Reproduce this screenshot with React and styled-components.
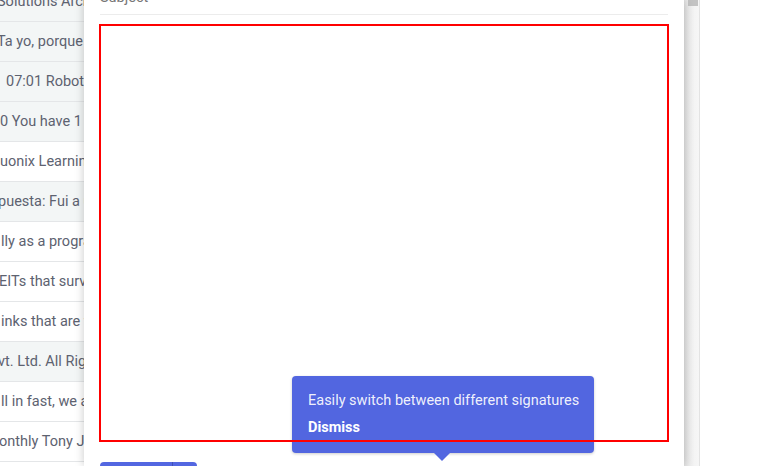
import React from "react";
import styled, { createGlobalStyle } from "styled-components";

const Global = createGlobalStyle`
  html, body { margin: 0; padding: 0; background: #fff; overflow: hidden; }
  body { font-family: Roboto, "Noto Sans", "Liberation Sans", sans-serif; }
  * { box-sizing: border-box; }
`;

const Page = styled.div`
  display: flex;
  width: 768px;
  height: 466px;
  overflow: hidden;
  position: relative;
`;

const ListPane = styled.div`
  width: 84px;
  flex: none;
  overflow: hidden;
  height: 466px;
`;

const ListInner = styled.div`
  margin-top: -18px;
  display: flex;
  flex-direction: column;
`;

const Row = styled.div`
  height: 40px;
  flex: none;
  display: flex;
  align-items: center;
  border-bottom: 1px solid #e4e6e8;
  background: ${(p) => (p.$read ? "#f3f6f6" : "#ffffff")};
  overflow: hidden;
  white-space: nowrap;
`;

const RowText = styled.span`
  font-size: 14.5px;
  color: #5d6270;
  margin-left: ${(p) => p.$shift}px;
`;

const Dialog = styled.div`
  width: 600px;
  flex: none;
  height: 466px;
  background: #fff;
  position: relative;
  z-index: 1;
  box-shadow: 0 0 9px rgba(0, 0, 0, 0.22);
  display: flex;
  flex-direction: column;
  padding: 0 15px;
`;

const SubjectRow = styled.div`
  flex: none;
  height: 15px;
  margin: 0 1px;
  border-bottom: 1px solid #ececec;
  display: flex;
  align-items: flex-end;
  overflow: hidden;
`;

const SubjectText = styled.span`
  font-size: 14.5px;
  line-height: 20px;
  color: #777;
  margin-bottom: 6px;
`;

const Editor = styled.div`
  margin-top: 9px;
  width: 570px;
  height: 418px;
  flex: none;
  border: 2px solid #ff0000;
  background: transparent;
  position: relative;
  z-index: 3;
`;

const SendGroup = styled.div`
  flex: none;
  margin-top: 20px;
  margin-left: 1px;
  display: flex;
  width: 97px;
  height: 36px;
  border-radius: 4px 4px 0 0;
  overflow: hidden;
`;

const SendMain = styled.div`
  width: 73px;
  background: #5367e1;
  border-right: 1px solid #3f50b8;
`;

const SendMore = styled.div`
  flex: 1;
  background: #5367e1;
`;

const Tooltip = styled.div`
  position: absolute;
  left: 208px;
  top: 376px;
  width: 302px;
  height: 77px;
  background: #5266e0;
  border-radius: 4px;
  box-shadow: 0 1px 3px rgba(0, 0, 0, 0.2);
  padding: 15px 16px 14px;
  z-index: 2;
  display: flex;
  flex-direction: column;
  gap: 7px;
  &::after {
    content: "";
    position: absolute;
    left: 142px;
    bottom: -8px;
    border-left: 8px solid transparent;
    border-right: 8px solid transparent;
    border-top: 8px solid #5266e0;
  }
`;

const TipText = styled.div`
  font-size: 14.5px;
  line-height: 20px;
  color: rgba(255, 255, 255, 0.92);
  white-space: nowrap;
`;

const TipAction = styled.div`
  font-size: 14.5px;
  line-height: 20px;
  font-weight: 700;
  color: #fff;
`;

const Track = styled.div`
  width: 16px;
  flex: none;
  height: 466px;
  background: linear-gradient(to right, #e4e4e4, #f4f4f4 70%, #f6f6f6);
  border-right: 1px solid #e3e3e3;
  padding: 0 1px 0 4px;
`;

const Thumb = styled.div`
  height: 6px;
  background: #c3c3c3;
`;

const Rest = styled.div`
  flex: 1;
  background: #fff;
`;

const rows = [
  { t: "Solutions Architect", s: -3, r: true },
  { t: "Ta yo, porque a", s: -3, r: true },
  { t: "07:01 Robots", s: 6, r: true },
  { t: "0 You have 1", s: 0, r: true },
  { t: "uonix Learning", s: 0, r: false },
  { t: "puesta: Fui a u", s: -2, r: true },
  { t: "lly as a program", s: 1, r: false },
  { t: "EITs that surv", s: -1, r: false },
  { t: "inks that are w", s: 1, r: false },
  { t: "vt. Ltd. All Rig", s: -2, r: true },
  { t: "ll in fast, we a", s: 1, r: false },
  { t: "onthly Tony J", s: -1, r: false },
];

export default function App() {
  return (
    <>
      <Global />
      <Page>
        <ListPane>
          <ListInner>
            {rows.map((row, i) => (
              <Row key={i} $read={row.r}>
                <RowText $shift={row.s}>{row.t}</RowText>
              </Row>
            ))}
          </ListInner>
        </ListPane>
        <Dialog>
          <SubjectRow>
            <SubjectText>Subject</SubjectText>
          </SubjectRow>
          <Editor />
          <SendGroup>
            <SendMain />
            <SendMore />
          </SendGroup>
          <Tooltip>
            <TipText>Easily switch between different signatures</TipText>
            <TipAction>Dismiss</TipAction>
          </Tooltip>
        </Dialog>
        <Track>
          <Thumb />
        </Track>
        <Rest />
      </Page>
    </>
  );
}
